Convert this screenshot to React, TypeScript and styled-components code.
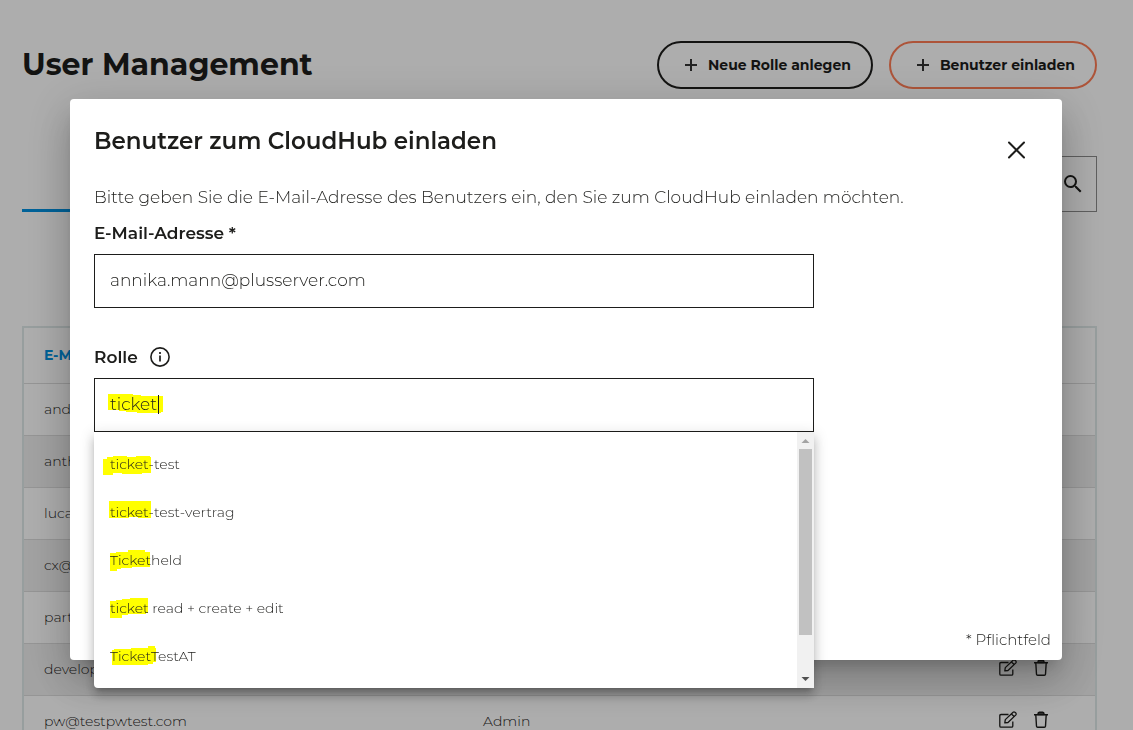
import React from 'react';
import styled, { createGlobalStyle } from 'styled-components';

const GlobalStyle = createGlobalStyle`
  *, *::before, *::after { box-sizing: border-box; }
  html, body { margin: 0; height: 100%; overflow: hidden; }
  body {
    background: #fff;
    color: #1d1d1b;
    font-family: Montserrat, Inter, "Liberation Sans", sans-serif;
    font-size: 14px;
    font-weight: 300;
  }
  button, input { font: inherit; color: inherit; }
`;

const Page = styled.div`
  padding: 41px 36px 0 22px;
`;

const PageHeader = styled.header`
  display: flex;
  align-items: center;
  gap: 16px;
`;

const PageTitle = styled.h1`
  flex: 1;
  margin: 0;
  font-size: 30px;
  line-height: 48px;
  font-weight: 700;
`;

const PillButton = styled.button<{ $border: string }>`
  display: flex;
  align-items: center;
  gap: 9px;
  height: 48px;
  padding: 0 20px 0 24px;
  border: 2px solid ${(p) => p.$border};
  border-radius: 24px;
  background: transparent;
  font-size: 14px;
  font-weight: 700;
  white-space: nowrap;
`;

const Toolbar = styled.div`
  display: flex;
  align-items: flex-end;
  justify-content: space-between;
  margin-top: 67px;
`;

const TabLine = styled.div`
  width: 240px;
  height: 3px;
  background: #0091e1;
`;

const SearchBox = styled.div`
  display: flex;
  width: 320px;
  height: 56px;
  border: 1px solid #8c8c8c;
`;

const SearchInput = styled.input`
  flex: 1;
  min-width: 0;
  padding: 0 16px;
  border: 0;
  background: transparent;
  outline: none;
`;

const SearchButton = styled.button`
  width: 47px;
  padding: 0;
  border: 0;
  background: transparent;
  svg { display: block; margin: 0 auto; }
`;

const UserTable = styled.table`
  width: 100%;
  margin-top: 114px;
  border: 2px solid #dfe9e9;
  border-collapse: separate;
  border-spacing: 0;
  table-layout: fixed;
  line-height: 20px;

  th, td {
    height: 52px;
    padding: 0 20px 2px;
    text-align: left;
    border-bottom: 1px solid #dcdcdc;
  }
  th {
    height: 56px;
    color: #0091e1;
    font-size: 14px;
    font-weight: 700;
  }
  th:last-child { text-align: right; padding-right: 33px; }
  tbody tr:nth-child(even) { background: #efefef; }
`;

const EmailCol = styled.col`
  width: 41%;
`;

const ActionCol = styled.col`
  width: 140px;
`;

const RowActions = styled.div`
  display: flex;
  justify-content: flex-end;
  gap: 13px;
  padding: 0 24px 2px 0;
`;

const IconButton = styled.button`
  display: flex;
  padding: 0;
  border: 0;
  background: transparent;
`;

const Overlay = styled.div`
  position: fixed;
  inset: 0;
  padding: 99px 71px 0 70px;
  background: rgba(0, 0, 0, 0.32);
`;

const Dialog = styled.section`
  border-radius: 4px;
  background: #fff;
  box-shadow: 0 11px 15px -7px rgba(0, 0, 0, 0.2), 0 24px 38px 3px rgba(0, 0, 0, 0.14),
    0 9px 46px 8px rgba(0, 0, 0, 0.12);
`;

const DialogHeader = styled.header`
  display: flex;
  align-items: flex-start;
  justify-content: space-between;
  padding: 24px 24px 0;
`;

const DialogTitle = styled.h2`
  margin: 0;
  font-size: 23px;
  line-height: 36px;
  font-weight: 600;
`;

const CloseButton = styled.button`
  width: 44px;
  height: 44px;
  margin-top: 5px;
  padding: 0;
  border: 0;
  background: transparent;
  svg { display: block; margin: 0 auto; }
`;

const DialogBody = styled.form`
  padding: 13px 24px 0;
`;

const Intro = styled.p`
  margin: 0 0 12px;
  font-size: 17px;
  line-height: 24px;
`;

const Field = styled.div`
  position: relative;
  max-width: 720px;
  & + & { margin-top: 37px; }
`;

const LabelRow = styled.div`
  display: flex;
  align-items: center;
  gap: 12px;
  margin-bottom: 9px;
`;

const FieldLabel = styled.label`
  font-size: 17px;
  line-height: 24px;
  font-weight: 600;
`;

const InputFrame = styled.div`
  position: relative;
  height: 54px;
  border: 1px solid #1d1d1b;
`;

const TextInput = styled.input`
  position: relative;
  display: block;
  width: 100%;
  height: 100%;
  padding: 0 15px 2px;
  border: 0;
  background: transparent;
  outline: none;
  font-size: 17px;
  caret-color: transparent;
`;

const Marker = styled.svg`
  position: absolute;
  left: 0;
  top: 0;
  pointer-events: none;
`;

const Dropdown = styled.div`
  position: absolute;
  top: 100%;
  left: 0;
  right: 0;
  display: flex;
  border-radius: 0 0 4px 4px;
  background: #fff;
  box-shadow: 0 5px 5px -3px rgba(0, 0, 0, 0.2), 0 8px 10px 1px rgba(0, 0, 0, 0.14),
    0 3px 14px 2px rgba(0, 0, 0, 0.12);
`;

const OptionList = styled.ul`
  flex: 1;
  margin: 0;
  padding: 8px 0;
  list-style: none;
`;

const Option = styled.li`
  position: relative;
  padding: 0 16px;
  font-size: 14px;
  line-height: 48px;
`;

const OptionText = styled.span`
  position: relative;
`;

const ScrollBar = styled.div`
  display: flex;
  flex-direction: column;
  width: 17px;
  background: #f1f1f1;
`;

const ScrollTrack = styled.div`
  flex: 1;
  padding: 0 2px;
`;

const ScrollThumb = styled.div`
  height: 84%;
  background: #c1c1c1;
`;

const RequiredNote = styled.p`
  margin: 196px 0 0;
  padding: 0 11px 8px;
  text-align: right;
  font-size: 15px;
  line-height: 24px;
`;

const PlusIcon = () => (
  <svg width="16" height="16" viewBox="0 0 16 16" stroke="#333" strokeWidth="2" aria-hidden="true">
    <path d="M8 2v12M2 8h12" />
  </svg>
);

const SearchIcon = () => (
  <svg width="24" height="24" viewBox="0 0 24 24" aria-hidden="true">
    <path
      fill="#1d1d1b"
      d="M15.5 14h-.79l-.28-.27A6.47 6.47 0 0 0 16 9.5 6.5 6.5 0 1 0 9.5 16c1.61 0 3.09-.59 4.23-1.57l.27.28v.79l5 4.99L20.49 19l-4.99-5zm-6 0C7.01 14 5 11.99 5 9.5S7.01 5 9.5 5 14 7.01 14 9.5 11.99 14 9.5 14z"
    />
  </svg>
);

const CloseIcon = () => (
  <svg width="20" height="20" viewBox="0 0 20 20" stroke="#1d1d1b" strokeWidth="2" strokeLinecap="round" aria-hidden="true">
    <path d="M3 2.500l15 15M18 2.500l-15 15" />
  </svg>
);

const InfoIcon = () => (
  <svg width="20" height="20" viewBox="0 0 20 20" fill="none" stroke="#1d1d1b" aria-hidden="true">
    <circle cx="10" cy="10" r="9.1" strokeWidth="1.6" />
    <path d="M10 8.500v6M10 5v2" strokeWidth="1.7" />
  </svg>
);

const EditIcon = () => (
  <svg width="20" height="20" viewBox="0 0 20 20" fill="none" stroke="#1d1d1b" strokeWidth="1.3" strokeLinejoin="round" aria-hidden="true">
    <path d="M10.500 4.500H3Q1.800 4.500 1.800 5.700V16Q1.800 17.200 3 17.200H13.600Q14.800 17.200 14.800 16V11.500" />
    <path d="M6.800 12.900l.5-3.300 7.800-7.400q.9-.7 1.800 0l1 .9q.7.9 0 1.800L10 12.500z" />
    <path d="M13.400 3.900l2.800 2.600" />
  </svg>
);

const TrashIcon = () => (
  <svg width="20" height="20" viewBox="0 0 20 20" fill="none" stroke="#1d1d1b" strokeWidth="1.4" strokeLinejoin="round" aria-hidden="true">
    <path d="M3 4.800h14M4.800 4.800l.7 11.400q.1 1.100 1.200 1.100h6.600q1.100 0 1.200-1.100l.7-11.400" />
    <path d="M6.800 4.500q.2-2.200 1.400-2.200h3.600q1.200 0 1.400 2.200z" fill="#555" />
  </svg>
);

const ArrowIcon = ({ up = false }: { up?: boolean }) => (
  <svg width="17" height="17" viewBox="0 0 17 17" aria-hidden="true">
    {up ? <path d="M4.500 11L8.500 7L12.500 11z" fill="#a3a3a3" /> : <path d="M4.500 6L8.500 10L12.500 6z" fill="#505050" />}
  </svg>
);

const users = [
  { email: 'and', role: '' },
  { email: 'anth', role: '' },
  { email: 'luca', role: '' },
  { email: 'cx@', role: '' },
  { email: 'part', role: '' },
  { email: 'develop', role: '' },
  { email: 'pw@testpwtest.com', role: 'Admin' },
];

const roles = [
  { name: 'ticket-test', marker: 'M9 19H13V17H19V16H33V17H42V16H56V17H57V33H48V34H28V33H19V35H9z' },
  { name: 'ticket-test-vertrag', marker: 'M15 13H57V30H44V29H35V30H15z' },
  { name: 'Ticketheld', marker: 'M16 17H22V16H34V14H51V16H56V31H38V32H27V33H23V35H16z' },
  { name: 'ticket read + create + edit', marker: 'M16 17H22V16H28V15H36V14H54V29H52V30H34V31H28V34H16z' },
  { name: 'TicketTestAT', marker: 'M18 18H20V17H37V16H54V14H61V16H62V30H59V32H54V33H18z' },
];

export default function App() {
  return (
    <>
      <GlobalStyle />
      <Page>
        <PageHeader>
          <PageTitle>User Management</PageTitle>
          <PillButton type="button" $border="#1d1d1b">
            <PlusIcon />
            Neue Rolle anlegen
          </PillButton>
          <PillButton type="button" $border="#ff7d55">
            <PlusIcon />
            Benutzer einladen
          </PillButton>
        </PageHeader>
        <Toolbar>
          <TabLine />
          <SearchBox>
            <SearchInput type="search" aria-label="Suche" />
            <SearchButton type="button" aria-label="Suchen">
              <SearchIcon />
            </SearchButton>
          </SearchBox>
        </Toolbar>
        <UserTable>
          <colgroup>
            <EmailCol />
            <col />
            <ActionCol />
          </colgroup>
          <thead>
            <tr>
              <th>E-Mail</th>
              <th>Rolle</th>
              <th>Aktionen</th>
            </tr>
          </thead>
          <tbody>
            {users.map((user) => (
              <tr key={user.email}>
                <td>{user.email}</td>
                <td>{user.role}</td>
                <td>
                  <RowActions>
                    <IconButton type="button" aria-label="Bearbeiten">
                      <EditIcon />
                    </IconButton>
                    <IconButton type="button" aria-label="Löschen">
                      <TrashIcon />
                    </IconButton>
                  </RowActions>
                </td>
              </tr>
            ))}
          </tbody>
        </UserTable>
      </Page>
      <Overlay>
        <Dialog role="dialog" aria-modal="true" aria-labelledby="dialog-title">
          <DialogHeader>
            <DialogTitle id="dialog-title">Benutzer zum CloudHub einladen</DialogTitle>
            <CloseButton type="button" aria-label="Schließen">
              <CloseIcon />
            </CloseButton>
          </DialogHeader>
          <DialogBody>
            <Intro>Bitte geben Sie die E-Mail-Adresse des Benutzers ein, den Sie zum CloudHub einladen möchten.</Intro>
            <Field>
              <LabelRow>
                <FieldLabel htmlFor="email">E-Mail-Adresse *</FieldLabel>
              </LabelRow>
              <InputFrame>
                <TextInput id="email" type="text" defaultValue="annika.mann@plusserver.com" />
              </InputFrame>
            </Field>
            <Field>
              <LabelRow>
                <FieldLabel htmlFor="role">Rolle</FieldLabel>
                <InfoIcon />
              </LabelRow>
              <InputFrame>
                <Marker width="100" height="52" viewBox="0 0 100 52" aria-hidden="true">
                  <path fill="#ff0" d="M13 15H38V16H46V17H68V33H66V34H42V33H31V32H24V31H13z" />
                  <path fill="#1d1d1b" d="M63 16h1v19h-1z" />
                </Marker>
                <TextInput id="role" type="text" role="combobox" aria-expanded="true" aria-controls="role-list" defaultValue="ticket" />
              </InputFrame>
              <Dropdown>
                <OptionList id="role-list" role="listbox">
                  {roles.map((role) => (
                    <Option key={role.name} role="option" aria-selected="false">
                      <Marker width="80" height="48" viewBox="0 0 80 48" aria-hidden="true">
                        <path fill="#ff0" d={role.marker} />
                      </Marker>
                      <OptionText>{role.name}</OptionText>
                    </Option>
                  ))}
                </OptionList>
                <ScrollBar aria-hidden="true">
                  <ArrowIcon up />
                  <ScrollTrack>
                    <ScrollThumb />
                  </ScrollTrack>
                  <ArrowIcon />
                </ScrollBar>
              </Dropdown>
            </Field>
          </DialogBody>
          <RequiredNote>* Pflichtfeld</RequiredNote>
        </Dialog>
      </Overlay>
    </>
  );
}
